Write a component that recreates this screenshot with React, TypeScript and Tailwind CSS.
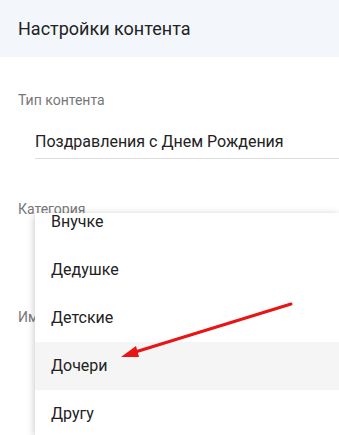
const items = ['Внучке', 'Дедушке', 'Детские', 'Дочери', 'Другу'];

export default function App() {
  return (
    <div className="relative w-[339px] h-[435px] overflow-hidden bg-white font-['Roboto',sans-serif]">
      <div className="h-[57px] bg-[#f3f7fc] px-[18px] flex items-center text-[18px] text-[#222]">
        Настройки контента
      </div>

      <div className="pl-[18px]">
        <div className="mt-[35px] text-[14px] leading-[16px] text-[#777]">Тип контента</div>
        <div className="ml-[17px] mt-[24px] pb-[7px] border-b border-[#ddd] text-[16px] leading-[19px] text-[#222]">
          Поздравления с Днем Рождения
        </div>
        <div className="mt-[42px] text-[14px] leading-[16px] text-[#777]">Категория</div>
        <div className="mt-[92px] text-[14px] leading-[16px] text-[#777]">Имя</div>
      </div>

      {/* open dropdown */}
      <div className="absolute left-[35px] right-0 top-[213px] bottom-0 bg-white overflow-hidden shadow-[0_2px_8px_rgba(0,0,0,0.25)]">
        <div className="-mt-[15px]">
          {items.map((item) => (
            <div
              key={item}
              className={`h-[48px] flex items-center px-[16px] text-[16px] text-[#222] ${
                item === 'Дочери' ? 'bg-[#f5f5f5]' : ''
              }`}
            >
              {item}
            </div>
          ))}
        </div>
      </div>

      <svg className="absolute inset-0 pointer-events-none" width="339" height="435">
        <line x1="291" y1="304" x2="132" y2="353" stroke="#e81515" strokeWidth="3" strokeLinecap="round" />
        <polygon points="121,357 136,346 139,357" fill="#e81515" />
      </svg>
    </div>
  );
}
